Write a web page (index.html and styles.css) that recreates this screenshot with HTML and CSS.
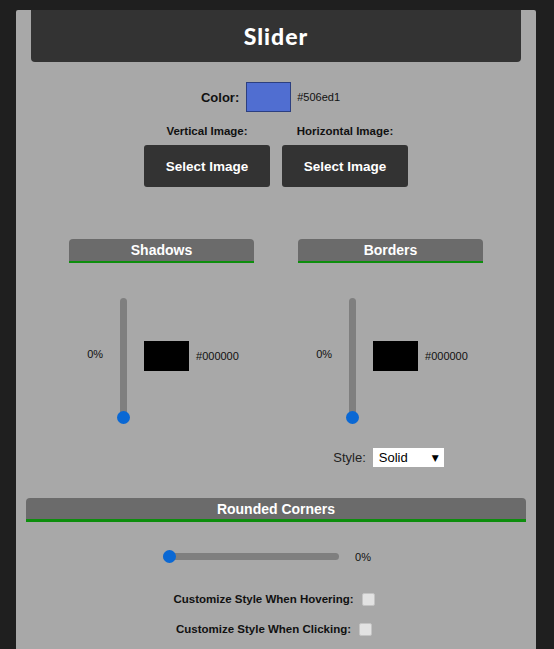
FILE: index.html
```html
<!DOCTYPE html>
<html>
<head>
<meta charset="utf-8">
<link rel="stylesheet" href="styles.css">
</head>
<body>
<div class="panel">
  <div class="title-bar"><h1>Slider</h1></div>

  <div class="color-row">
    <span class="color-label">Color:</span>
    <span class="swatch swatch-blue"></span>
    <span class="hex">#506ed1</span>
  </div>

  <div class="image-row">
    <div class="image-col">
      <div class="image-label">Vertical Image:</div>
      <button class="btn">Select Image</button>
    </div>
    <div class="image-col">
      <div class="image-label">Horizontal Image:</div>
      <button class="btn">Select Image</button>
    </div>
  </div>

  <div class="columns">
    <div class="column">
      <div class="section-head">Shadows</div>
      <div class="control-row">
        <span class="pct">0%</span>
        <div class="vslider"><span class="vtrack"></span><span class="thumb vthumb"></span></div>
        <span class="swatch swatch-black"></span>
        <span class="hex">#000000</span>
      </div>
    </div>
    <div class="column">
      <div class="section-head">Borders</div>
      <div class="control-row">
        <span class="pct">0%</span>
        <div class="vslider"><span class="vtrack"></span><span class="thumb vthumb"></span></div>
        <span class="swatch swatch-black"></span>
        <span class="hex">#000000</span>
      </div>
      <div class="style-row">
        <span class="style-label">Style:</span>
        <div class="select"><span>Solid</span><span class="arrow">&#9660;</span></div>
      </div>
    </div>
  </div>

  <div class="section-head wide">Rounded Corners</div>

  <div class="hslider-row">
    <div class="hslider"><span class="htrack"></span><span class="thumb hthumb"></span></div>
    <span class="pct">0%</span>
  </div>

  <div class="check-row first">
    <span class="check-label">Customize Style When Hovering:</span>
    <span class="checkbox"></span>
  </div>
  <div class="check-row">
    <span class="check-label">Customize Style When Clicking:</span>
    <span class="checkbox"></span>
  </div>
</div>
</body>
</html>
```

FILE: styles.css
```css
html, body {
  margin: 0;
  padding: 0;
}
body {
  background: #1f1f1f;
  font-family: "Liberation Sans", Arial, sans-serif;
  color: #111;
  height: 649px;
  overflow: hidden;
}
.panel {
  margin: 10px 0 0 16px;
  width: 520px;
  height: 639px;
  background: #a8a8a8;
  border-radius: 2px 2px 0 0;
  padding: 0 10px;
  box-sizing: border-box;
  display: flex;
  flex-direction: column;
}
.title-bar {
  margin: 0 5px;
  height: 52px;
  flex-shrink: 0;
  background: #333333;
  border-radius: 0 0 4px 4px;
  display: flex;
  align-items: center;
  justify-content: center;
}
.title-bar h1 {
  margin: 0;
  color: #fff;
  font-family: Lato, "DejaVu Sans", sans-serif;
  font-weight: 900;
  font-size: 23px;
  letter-spacing: 1px;
  line-height: 1;
  padding-top: 1px;
}
.color-row {
  margin-top: 20px;
  height: 30px;
  flex-shrink: 0;
  display: flex;
  align-items: center;
  justify-content: center;
  padding-right: 11px;
}
.color-label {
  font-weight: bold;
  font-size: 13px;
  margin-right: 7px;
}
.swatch {
  width: 45px;
  height: 30px;
  box-sizing: border-box;
}
.swatch-blue {
  background: #506ed1;
  border: 1px solid #2c3f80;
}
.swatch-black {
  background: #000;
}
.hex {
  font-size: 11px;
  margin-left: 6px;
}
.image-row {
  margin-top: 13px;
  display: flex;
  justify-content: center;
  gap: 12px;
}
.image-col {
  display: flex;
  flex-direction: column;
  align-items: center;
  width: 126px;
}
.image-label {
  font-size: 11.5px;
  font-weight: bold;
  line-height: 13px;
  margin-bottom: 7px;
  white-space: nowrap;
}
.btn {
  width: 126px;
  height: 42px;
  background: #333;
  color: #fff;
  border: none;
  border-radius: 3px;
  font-family: "Liberation Sans", Arial, sans-serif;
  font-weight: bold;
  font-size: 13.5px;
  padding: 0;
}
.columns {
  margin-top: 52px;
  display: flex;
  justify-content: center;
  gap: 44px;
}
.column {
  width: 185px;
  display: flex;
  flex-direction: column;
  align-items: center;
}
.section-head {
  align-self: stretch;
  flex-shrink: 0;
  height: 22px;
  background: #6b6b6b;
  border-bottom: 2px solid #0d8e0d;
  border-radius: 4px 4px 0 0;
  color: #fff;
  font-weight: bold;
  font-size: 14px;
  line-height: 23px;
  text-align: center;
}
.section-head.wide {
  margin-top: 31px;
  border-bottom-width: 3px;
  height: 21px;
  line-height: 23px;
}
.control-row {
  margin-top: 35px;
  height: 116px;
  display: flex;
  align-items: center;
  padding-left: 3px;
}
.pct {
  font-size: 11px;
  margin-right: 14px;
  margin-top: -4px;
}
.vslider {
  position: relative;
  width: 13px;
  height: 116px;
  margin-right: 14px;
}
.vtrack {
  position: absolute;
  left: 3px;
  top: 0;
  width: 7px;
  height: 124px;
  background: #7f7f7f;
  border-radius: 4px;
}
.thumb {
  position: absolute;
  width: 13px;
  height: 13px;
  border-radius: 50%;
  background: #0a68d4;
}
.vthumb {
  left: 0;
  top: 113px;
}
.column .hex {
  margin-left: 7px;
}
.style-row {
  margin-top: 34px;
  display: flex;
  align-items: center;
  gap: 7px;
  padding-right: 4px;
}
.style-label {
  font-size: 13px;
  color: #222;
}
.select {
  width: 71px;
  height: 19px;
  box-sizing: border-box;
  background: #fff;
  display: flex;
  align-items: center;
  justify-content: space-between;
  padding: 0 5px 0 6px;
  font-size: 13px;
  color: #000;
}
.select .arrow {
  font-size: 9px;
  font-family: "DejaVu Sans", sans-serif;
}
.hslider-row {
  margin-top: 28px;
  height: 13px;
  flex-shrink: 0;
  display: flex;
  align-items: center;
  justify-content: center;
  padding-right: 18px;
}
.hslider {
  position: relative;
  width: 176px;
  height: 13px;
  margin-right: 16px;
}
.htrack {
  position: absolute;
  left: 0;
  top: 3px;
  width: 176px;
  height: 7px;
  background: #7f7f7f;
  border-radius: 4px;
}
.hthumb {
  left: 0;
  top: 0;
}
.hslider-row .pct {
  margin: 0;
}
.check-row {
  margin-top: 14px;
  height: 16px;
  flex-shrink: 0;
  display: flex;
  align-items: center;
  justify-content: center;
  padding-right: 4px;
}
.check-row.first {
  margin-top: 28px;
}
.check-label {
  font-weight: bold;
  font-size: 11.5px;
  margin-right: 8px;
}
.checkbox {
  width: 11px;
  height: 11px;
  background: #e2e2e2;
  border: 1px solid #c4c4c4;
  border-radius: 2px;
}
```
